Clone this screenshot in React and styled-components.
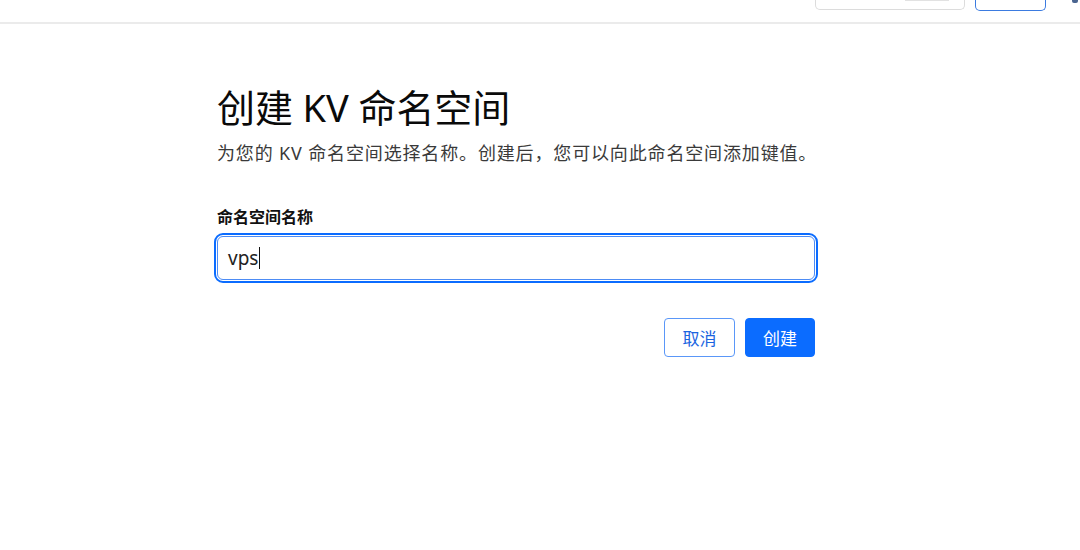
import React from "react";
import styled, { createGlobalStyle } from "styled-components";

const Global = createGlobalStyle`
  html, body { margin: 0; padding: 0; background: #fff; }
  body { font-family: "Noto Sans", "Noto Sans CJK SC", sans-serif; color: #1d1d1d; }
`;

const TopBar = styled.header`
  height: 24px;
  border-bottom: 2px solid #ebebeb;
  display: flex;
  align-items: flex-start;
  justify-content: flex-end;
  gap: 10px;
  box-sizing: border-box;
  overflow: hidden;
`;

const SearchBox = styled.div`
  width: 150px;
  height: 10px;
  flex: none;
  box-sizing: border-box;
  border: 1px solid #dcdcdc;
  border-top: none;
  border-radius: 0 0 5px 5px;
  display: flex;
  justify-content: flex-end;
  padding-right: 15px;
`;

const Kbd = styled.span`
  width: 44px;
  height: 1px;
  background: #e2e2e2;
`;

const OutlineTop = styled.div`
  width: 71px;
  height: 11px;
  flex: none;
  box-sizing: border-box;
  border: 1px solid #3b7be0;
  border-top: none;
  border-radius: 0 0 5px 5px;
`;

const Avatar = styled.div`
  width: 6px;
  height: 3px;
  flex: none;
  margin-left: 16px;
  margin-right: 2px;
  background: #4a6590;
  border-radius: 0 0 2px 2px;
`;

const Main = styled.main`
  width: 604px;
  margin-left: 214px;
  padding-top: 53px;
`;

const Title = styled.h1`
  margin: 0 0 0 3px;
  font-size: 38px;
  font-weight: 400;
  line-height: 60px;
  color: #0a0a0a;
  letter-spacing: -0.1px;
`;

const Subtitle = styled.p`
  margin: 4px 0 0 3px;
  font-size: 18px;
  line-height: 24px;
  color: #3a3a3a;
  letter-spacing: 0.85px;
  white-space: nowrap;
`;

const Label = styled.label`
  display: block;
  margin: 41px 0 0 3px;
  font-size: 16px;
  font-weight: 700;
  line-height: 22px;
  color: #111;
`;

const InputRing = styled.div`
  margin-top: 5px;
  height: 50px;
  box-sizing: border-box;
  border: 2px solid #0b6cff;
  border-radius: 9px;
  padding: 1px;
`;

const Input = styled.div`
  height: 100%;
  box-sizing: border-box;
  border: 1px solid #4d8cf5;
  border-radius: 6px;
  display: flex;
  align-items: center;
  padding-left: 10px;
  font-size: 19px;
  color: #222;
`;

const Caret = styled.span`
  display: inline-block;
  width: 1px;
  height: 22px;
  background: #111;
  margin-left: 1px;
`;

const Actions = styled.div`
  display: flex;
  justify-content: flex-end;
  gap: 10px;
  margin-top: 35px;
  padding-right: 3px;
`;

const Button = styled.button`
  width: ${(p) => (p.$primary ? "70px" : "71px")};
  height: 39px;
  box-sizing: border-box;
  border-radius: 4px;
  font-family: "Noto Sans CJK SC", sans-serif;
  font-size: 17px;
  cursor: pointer;
  border: 1px solid ${(p) => (p.$primary ? "#0b6cff" : "#5a97f8")};
  background: ${(p) => (p.$primary ? "#0b6cff" : "#fff")};
  color: ${(p) => (p.$primary ? "#fff" : "#1a64e0")};
`;

export default function App() {
  return (
    <>
      <Global />
      <TopBar>
        <SearchBox>
          <Kbd />
        </SearchBox>
        <OutlineTop />
        <Avatar />
      </TopBar>
      <Main>
        <Title>创建 KV 命名空间</Title>
        <Subtitle>为您的 KV 命名空间选择名称。创建后，您可以向此命名空间添加键值。</Subtitle>
        <Label>命名空间名称</Label>
        <InputRing>
          <Input>
            vps
            <Caret />
          </Input>
        </InputRing>
        <Actions>
          <Button type="button">取消</Button>
          <Button type="button" $primary>
            创建
          </Button>
        </Actions>
      </Main>
    </>
  );
}
